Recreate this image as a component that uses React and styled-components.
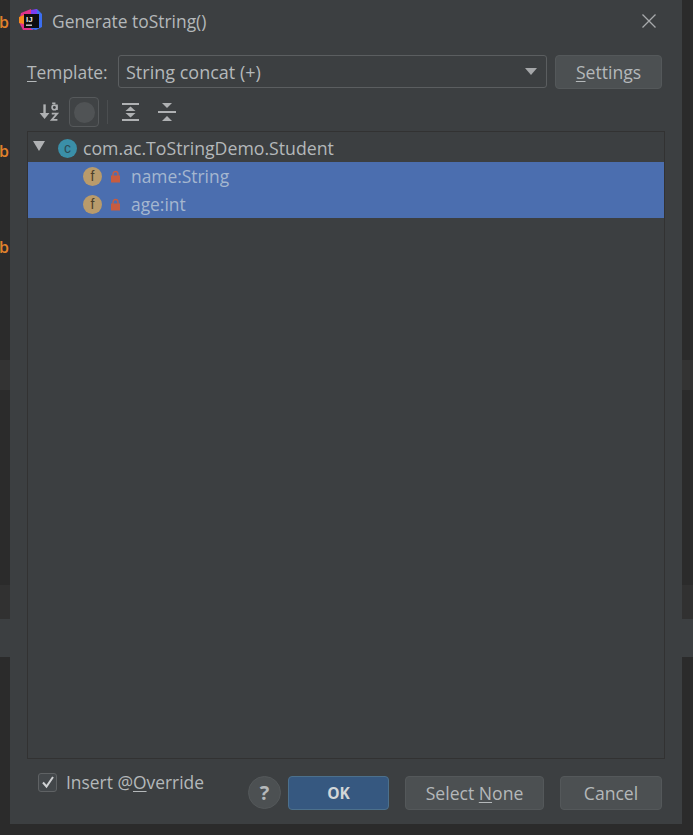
import React from "react";
import styled, { createGlobalStyle } from "styled-components";

const Global = createGlobalStyle`
  html, body { margin: 0; padding: 0; background: #2b2b2b; }
  body { font-family: "Open Sans", "Noto Sans", sans-serif; overflow: hidden; }
`;

const Page = styled.div`
  position: relative;
  width: 693px;
  height: 835px;
  box-sizing: border-box;
  padding: 0 11px 11px 10px;
  background: linear-gradient(
    to bottom,
    #2b2b2b 0 360px,
    #333333 360px 390px,
    #2b2b2b 390px 585px,
    #313131 585px 619px,
    #3c3f41 619px 657px,
    #2b2b2b 657px
  );
`;

const EditorMark = styled.span`
  position: absolute;
  left: -1px;
  top: ${(p) => p.$top}px;
  color: #e0812b;
  font-size: 16px;
  font-weight: 600;
  line-height: 20px;
`;

const Dialog = styled.div`
  height: 824px;
  box-sizing: border-box;
  background: #3c3f41;
  color: #bbbbbb;
  display: flex;
  flex-direction: column;
  padding: 0 17px 0 17px;
`;

const TitleBar = styled.div`
  height: 42px;
  flex: none;
  display: flex;
  align-items: center;
  margin-left: -8px;
  gap: 9px;
  font-size: 17.4px;
  color: #b4b8ba;
`;

const TitleText = styled.span`
  flex: 1;
`;

const TemplateRow = styled.div`
  margin-top: 13px;
  height: 33px;
  flex: none;
  display: flex;
  align-items: center;
`;

const FieldLabel = styled.label`
  width: 91px;
  flex: none;
  font-size: 17.4px;
  color: #b4b8ba;
`;

const Mnemonic = styled.span`
  text-decoration: underline;
  text-underline-offset: 2px;
`;

const Combo = styled.div`
  width: 429px;
  height: 33px;
  box-sizing: border-box;
  flex: none;
  display: flex;
  align-items: center;
  justify-content: space-between;
  padding: 0 9px 0 7px;
  border: 1px solid #5b5e60;
  border-radius: 3px;
  font-size: 18px;
  color: #b4b8ba;
  background: #3c3f41;
`;

const Caret = styled.span`
  width: 0;
  height: 0;
  border-left: 6px solid transparent;
  border-right: 6px solid transparent;
  border-top: 7px solid #a5a7a9;
`;

const Button = styled.button`
  height: 34px;
  width: ${(p) => p.$w}px;
  box-sizing: border-box;
  flex: none;
  border: 1px solid ${(p) => (p.$primary ? "#4c708c" : "#54585a")};
  border-radius: 4px;
  background: ${(p) => (p.$primary ? "#365880" : "#4c5052")};
  color: ${(p) => (p.$primary ? "#d2d6d8" : "#b4b8ba")};
  font-family: inherit;
  font-size: ${(p) => (p.$primary ? 15.5 : 17.6)}px;
  font-weight: ${(p) => (p.$primary ? 700 : 400)};
  padding: 0;
  margin-left: ${(p) => p.$ml || 0}px;
`;

const Toolbar = styled.div`
  margin-top: 8px;
  height: 32px;
  flex: none;
  display: flex;
  align-items: center;
  padding-left: 8px;
`;

const ToolIcon = styled.span`
  width: 30px;
  height: 30px;
  flex: none;
  display: flex;
  align-items: center;
  justify-content: center;
  margin-right: ${(p) => p.$mr || 0}px;
  box-sizing: border-box;
  ${(p) =>
    p.$active &&
    "border: 1px solid #56595b; border-radius: 4px; background: #404345;"}
`;

const ToolDivider = styled.span`
  width: 1px;
  height: 24px;
  background: #4b4e50;
  margin: 0 8px 0 8px;
  flex: none;
`;

const Disc = styled.span`
  width: 21px;
  height: 21px;
  border-radius: 50%;
  background: #505355;
`;

const Tree = styled.div`
  margin-top: 3px;
  height: 628px;
  flex: none;
  box-sizing: border-box;
  border: 1px solid #323232;
  background: #3c3f41;
  padding-top: 2px;
`;

const Row = styled.div`
  height: 28px;
  display: flex;
  align-items: center;
  font-size: ${(p) => (p.$selected ? 17.4 : 17.7)}px;
  color: ${(p) => (p.$selected ? "#a5b7cf" : "#b4b8ba")};
  background: ${(p) => (p.$selected ? "#4b6eaf" : "transparent")};
  padding-left: ${(p) => p.$indent}px;
`;

const RowCaret = styled.span`
  width: 0;
  height: 0;
  border-left: 6px solid transparent;
  border-right: 6px solid transparent;
  border-top: 10px solid #afb1b3;
  margin: -4px 13px 0 0;
`;

const Badge = styled.span`
  width: 19px;
  height: 19px;
  flex: none;
  border-radius: 50%;
  display: flex;
  align-items: center;
  justify-content: center;
  background: ${(p) => p.$bg};
  color: ${(p) => p.$fg};
  font-size: 14px;
  font-weight: 400;
  line-height: 1;
  font-family: "Liberation Sans", sans-serif;
  margin-right: ${(p) => p.$mr}px;
`;

const Footer = styled.div`
  flex: 1;
  display: flex;
  position: relative;
  align-items: flex-start;
  padding: 17px 2px 0 11px;
`;

const CheckGroup = styled.div`
  display: flex;
  align-items: center;
  gap: 9px;
  font-size: 17.4px;
  color: #b4b8ba;
  width: 210px;
  flex: none;
  margin-top: -6px;
`;

const Check = styled.span`
  width: 19px;
  height: 19px;
  box-sizing: border-box;
  border: 1px solid #5f6264;
  border-radius: 3px;
  background: #43474a;
  display: flex;
  align-items: center;
  justify-content: center;
`;

const Help = styled.span`
  width: 33px;
  height: 33px;
  flex: none;
  box-sizing: border-box;
  border-radius: 50%;
  background: #4c5052;
  border: 1px solid #54585a;
  display: flex;
  align-items: center;
  justify-content: center;
  color: #b4b8ba;
  font-size: 20px;
  font-weight: 700;
`;

const FooterButtons = styled.div`
  display: flex;
  align-items: center;
`;

const Logo = () => (
  <svg width="24" height="24" viewBox="0 0 24 24">
    <path d="M2 4 L12 0 L14 21 L4 21 L0 13 Z" fill="#e0318a" />
    <path d="M0 8 L5 6 L5 15 L0 14 Z" fill="#f58a1f" />
    <path d="M12 2 L18 0 L23 5 L23 18 L17 21 L12 20 Z" fill="#3b6ef0" />
    <path d="M12 1 L18 0 L18 5 L12 5 Z" fill="#7a3ff0" />
    <rect x="5" y="5" width="15" height="14" fill="#0d0d0d" />
    <text x="7" y="12.5" fontSize="8" fontWeight="700" fill="#e8e8e8" fontFamily="Liberation Sans, sans-serif">IJ</text>
    <rect x="7" y="15.5" width="6" height="1.4" fill="#cfcfcf" />
  </svg>
);

const SortIcon = () => (
  <svg width="24" height="24" viewBox="0 0 22 22" fill="none">
    <path d="M6 4 V15" stroke="#afb1b3" strokeWidth="2.2" />
    <path d="M1.5 12 L6 17.5 L10.5 12 Z" fill="#afb1b3" />
    <circle cx="15" cy="6.8" r="2.1" stroke="#afb1b3" strokeWidth="1.5" />
    <path d="M17.4 4.2 V9.2 M13 3 H16" stroke="#afb1b3" strokeWidth="1.5" />
    <path d="M12.6 12.5 H17.6 L12.6 18.2 H17.8" stroke="#afb1b3" strokeWidth="1.6" />
  </svg>
);

const ExpandIcon = () => (
  <svg width="20" height="20" viewBox="0 0 20 20" fill="#afb1b3">
    <rect x="1" y="1" width="17" height="2" />
    <path d="M9.5 4.5 L14.5 9 L4.5 9 Z" />
    <path d="M9.5 15.5 L14.5 11 L4.5 11 Z" />
    <rect x="1" y="17" width="17" height="2" />
  </svg>
);

const CollapseIcon = () => (
  <svg width="20" height="20" viewBox="0 0 20 20" fill="#afb1b3">
    <path d="M5 1 L15 1 L10 6 Z" />
    <rect x="1" y="9" width="18" height="2" />
    <path d="M5 19 L15 19 L10 14 Z" />
  </svg>
);

const Lock = () => (
  <svg width="11" height="13" viewBox="0 0 11 13" style={{ marginRight: 10 }}>
    <path d="M3 6 V4 A2.5 2.5 0 0 1 8 4 V6" fill="none" stroke="#c75c3f" strokeWidth="1.3" />
    <rect x="1" y="5.5" width="9" height="7" fill="#c75c3f" />
  </svg>
);

const CloseIcon = () => (
  <svg width="16" height="16" viewBox="0 0 16 16" stroke="#a8aaac" strokeWidth="1.3" style={{ marginRight: 8 }}>
    <path d="M1.5 1.5 L14.5 14.5 M14.5 1.5 L1.5 14.5" />
  </svg>
);

const CheckMark = () => (
  <svg width="14" height="14" viewBox="0 0 14 14" fill="none" stroke="#d0d2d4" strokeWidth="2">
    <path d="M2 7.5 L5.5 11.5 L12 2" />
  </svg>
);

const fields = ["name:String", "age:int"];

export default function App() {
  return (
    <Page>
      <Global />
      <EditorMark $top={12}>b</EditorMark>
      <EditorMark $top={141}>b</EditorMark>
      <EditorMark $top={237}>b</EditorMark>
      <Dialog>
        <TitleBar>
          <Logo />
          <TitleText>Generate toString()</TitleText>
          <CloseIcon />
        </TitleBar>
        <TemplateRow>
          <FieldLabel>
            <Mnemonic>T</Mnemonic>emplate:
          </FieldLabel>
          <Combo>
            String concat (+)
            <Caret />
          </Combo>
          <Button $w={107} $ml={8}>
            <Mnemonic>S</Mnemonic>ettings
          </Button>
        </TemplateRow>
        <Toolbar>
          <ToolIcon $mr={4}>
            <SortIcon />
          </ToolIcon>
          <ToolIcon $active>
            <Disc />
          </ToolIcon>
          <ToolDivider />
          <ToolIcon $mr={6}>
            <ExpandIcon />
          </ToolIcon>
          <ToolIcon>
            <CollapseIcon />
          </ToolIcon>
        </Toolbar>
        <Tree>
          <Row $indent={5}>
            <RowCaret />
            <Badge $bg="#3a8fa8" $fg="#2c4a55" $mr={6}>c</Badge>
            com.ac.ToStringDemo.Student
          </Row>
          {fields.map((f) => (
            <Row key={f} $selected $indent={55}>
              <Badge $bg="#b99b6b" $fg="#4b3f2a" $mr={8}>f</Badge>
              <Lock />
              {f}
            </Row>
          ))}
        </Tree>
        <Footer>
          <CheckGroup>
            <Check>
              <CheckMark />
            </Check>
            <span>
              Insert @<Mnemonic>O</Mnemonic>verride
            </span>
          </CheckGroup>
          <Help>?</Help>
          <FooterButtons>
            <Button $w={101} $ml={7} $primary>OK</Button>
            <Button $w={139} $ml={16}>
              Select <Mnemonic>N</Mnemonic>one
            </Button>
            <Button $w={102} $ml={16}>Cancel</Button>
          </FooterButtons>
        </Footer>
      </Dialog>
    </Page>
  );
}
